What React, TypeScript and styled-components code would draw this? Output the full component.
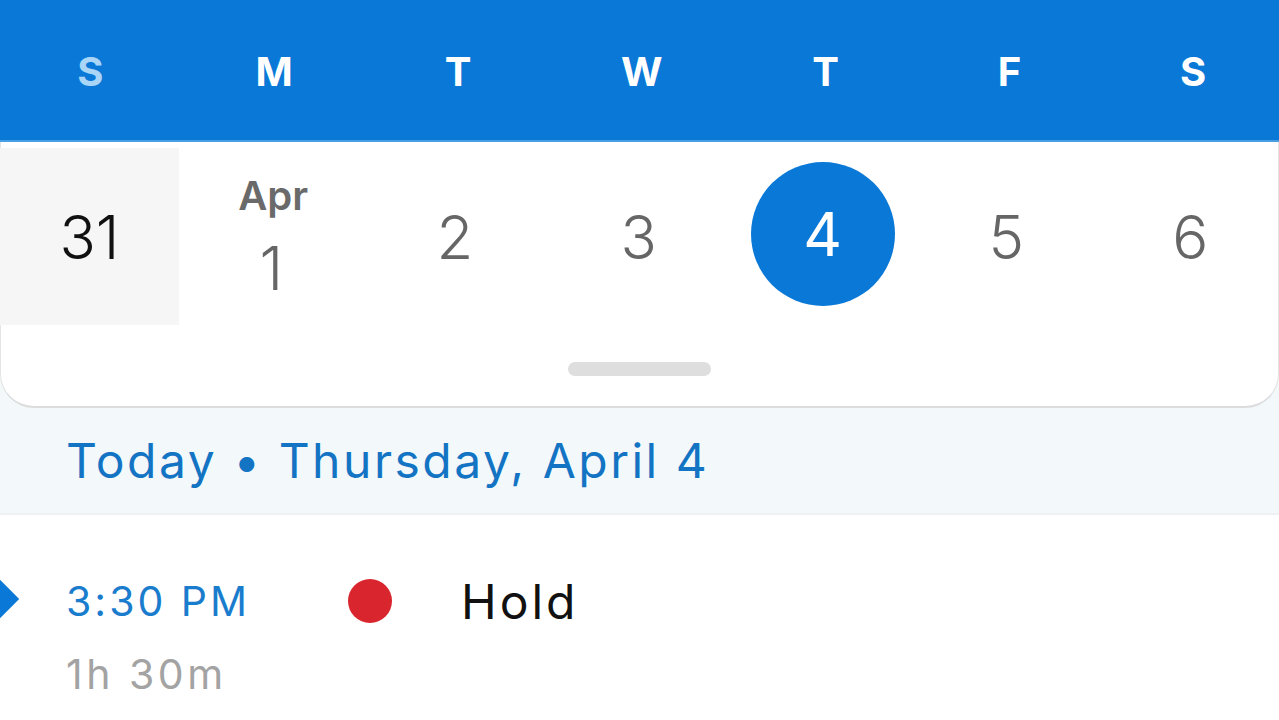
import React from 'react'
import styled, { createGlobalStyle } from 'styled-components'

const Global = createGlobalStyle`
  html, body { margin: 0; padding: 0; background: #f3f8fb; }
  body { font-family: Inter, "Liberation Sans", Arial, sans-serif; }
`

const Page = styled.div`width: 1279px; height: 720px; overflow: hidden; display: flex; flex-direction: column;`

const Header = styled.div`
  height: 140px;
  background: #0a78d7;
  border-bottom: 2px solid #4a9ee4;
  display: grid;
  grid-template-columns: repeat(7, 183.8px);
  margin-left: -1px;
  align-items: center;
`
const DayLetter = styled.div<{ $dim?: boolean }>`
  text-align: center;
  font-weight: 700;
  font-size: 40px;
  letter-spacing: 1px;
  color: ${p => (p.$dim ? '#a9d5f6' : '#ffffff')};
  padding-top: 2px;
`

const Sheet = styled.div`
  background: #fff;
  height: 264px;
  border-bottom: 2px solid #dcdcdc;
  border-left: 1px solid #e4e4e4;
  border-right: 1px solid #e4e4e4;
  border-radius: 0 0 34px 34px;
  display: flex;
  flex-direction: column;
  align-items: center;
`
const Dates = styled.div`
  width: 1287px;
  margin-left: -1px;
  display: grid;
  grid-template-columns: repeat(7, 183.8px);
  padding-top: 6px;
  height: 177px;
`
const DateCell = styled.div<{ $past?: boolean }>`
  display: flex;
  flex-direction: column;
  align-items: center;
  justify-content: center;
  background: ${p => (p.$past ? '#f6f6f6' : 'transparent')};
  padding-left: ${p => (p.$past ? '4px' : '0')};
  background-clip: content-box;
`
const DateNum = styled.div<{ $past?: boolean }>`
  font-size: 60px;
  font-weight: 300;
  line-height: 1;
  color: ${p => (p.$past ? '#111' : '#666')};
`
const Month = styled.div`
  font-size: 40px;
  font-weight: 600;
  color: #6a6a6a;
  line-height: 1;
  margin-bottom: 22px;
  padding-left: 4px;
`
const Selected = styled.div`
  width: 144px;
  height: 144px;
  border-radius: 50%;
  background: #0a78d7;
  color: #fff;
  font-size: 60px;
  font-weight: 400;
  display: flex;
  align-items: center;
  justify-content: center;
  margin-top: -5px;
`
const Handle = styled.div`
  margin-top: 37px;
  width: 143px;
  height: 14px;
  border-radius: 7px;
  background: #dedede;
`

const DayHeading = styled.div`
  height: 105px;
  display: flex;
  align-items: center;
  padding-left: 66px;
  font-size: 48px;
  letter-spacing: 2.5px;
  color: #1474c4;
  border-bottom: 2px solid #eef0f2;
`

const Agenda = styled.div`
  flex: 1;
  background: #fff;
  padding-top: 56px;
  position: relative;
`
const EventRow = styled.div`
  display: flex;
  align-items: center;
  height: 60px;
`
const Diamond = styled.div`
  position: absolute;
  left: -17px;
  top: 69px;
  width: 30px;
  height: 30px;
  background: #0a78d7;
  transform: rotate(45deg);
`
const Time = styled.div`
  width: 282px;
  padding-left: 66px;
  font-size: 41px;
  letter-spacing: 3px;
  color: #1a7ccd;
`
const Dot = styled.div<{ $color: string }>`
  width: 44px;
  height: 44px;
  border-radius: 50%;
  background: ${p => p.$color};
`
const Title = styled.div`
  margin-left: 69px;
  font-size: 48px;
  letter-spacing: 3px;
  color: #111;
`
const Duration = styled.div`
  padding-left: 66px;
  margin-top: 18px;
  font-size: 41px;
  letter-spacing: 3.5px;
  color: #a3a3a3;
`

const days = ['S', 'M', 'T', 'W', 'T', 'F', 'S']

export default function App() {
  return (
    <Page>
      <Global />
      <Header>
        {days.map((d, i) => (
          <DayLetter key={i} $dim={i === 0}>{d}</DayLetter>
        ))}
      </Header>
      <Sheet>
        <Dates>
          <DateCell $past><DateNum $past>31</DateNum></DateCell>
          <DateCell>
            <Month>Apr</Month>
            <DateNum>1</DateNum>
          </DateCell>
          <DateCell><DateNum>2</DateNum></DateCell>
          <DateCell><DateNum>3</DateNum></DateCell>
          <DateCell><Selected>4</Selected></DateCell>
          <DateCell><DateNum>5</DateNum></DateCell>
          <DateCell><DateNum>6</DateNum></DateCell>
        </Dates>
        <Handle />
      </Sheet>
      <DayHeading>Today • Thursday, April 4</DayHeading>
      <Agenda>
        <Diamond />
        <EventRow>
          <Time>3:30 PM</Time>
          <Dot $color="#d9262e" />
          <Title>Hold</Title>
        </EventRow>
        <Duration>1h 30m</Duration>
      </Agenda>
    </Page>
  )
}
